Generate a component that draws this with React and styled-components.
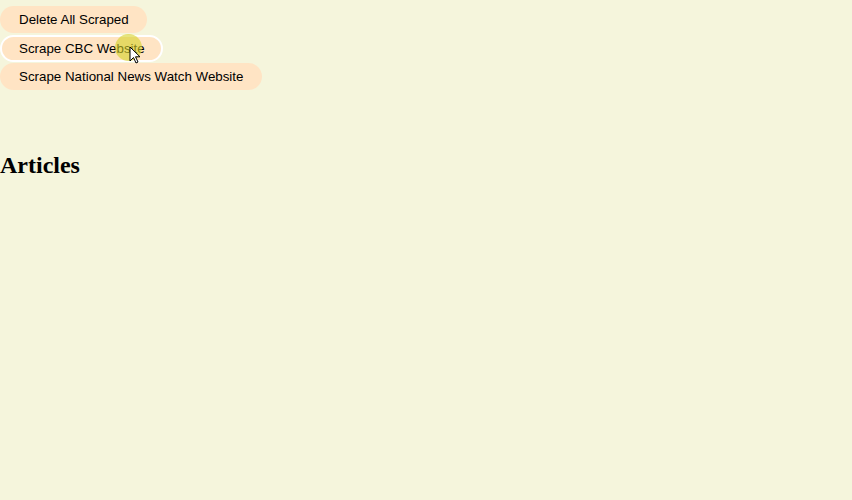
import React from "react";
import styled, { createGlobalStyle } from "styled-components";

const Global = createGlobalStyle`
    html, body {
        margin: 0;
        background: #f5f5dc;
    }
`;

const Page = styled.div`
    position: relative;
    min-height: 500px;
    background: #f5f5dc;
`;

const Controls = styled.div`
    display: flex;
    flex-direction: column;
    align-items: flex-start;
    gap: 1.5px;
    padding-top: 6px;
`;

const Button = styled.button`
    height: 27px;
    padding: 0 16.5px 0 17px;
    border: 2px solid ${props => props.focused ? "#ffffff" : "transparent"};
    border-radius: 14px;
    background: #ffe4c4;
    color: #000;
    font-family: "Liberation Sans", Arial, sans-serif;
    font-size: 13.33px;
    cursor: pointer;
`;

const Title = styled.h2`
    margin: 62px 0 0;
    font-family: "Liberation Serif", "Times New Roman", serif;
    font-size: 24px;
    font-weight: bold;
    color: #000;
`;

const Pointer = styled.div`
    position: absolute;
    left: 115px;
    top: 34px;
    width: 27px;
    height: 27px;
    pointer-events: none;
`;

const Halo = styled.div`
    position: absolute;
    inset: 0;
    border-radius: 50%;
    background: rgba(214, 210, 40, 0.6);
`;

export default () => {
    return <Page>
        <Global />
        <Controls>
            <Button>Delete All Scraped</Button>
            <Button focused>Scrape CBC Website</Button>
            <Button>Scrape National News Watch Website</Button>
        </Controls>
        <Title>Articles</Title>
        <Pointer>
            <Halo />
            <svg width="14" height="20" viewBox="0 0 14 20" style={{ position: "absolute", left: 14, top: 12 }}>
                <path d="M1 1 L1 15 L4.5 11.5 L7 17 L9 16 L6.5 10.8 L11 10.8 Z" fill="#fff" stroke="#000" strokeWidth="1" strokeLinejoin="round" />
            </svg>
        </Pointer>
    </Page>;
}
